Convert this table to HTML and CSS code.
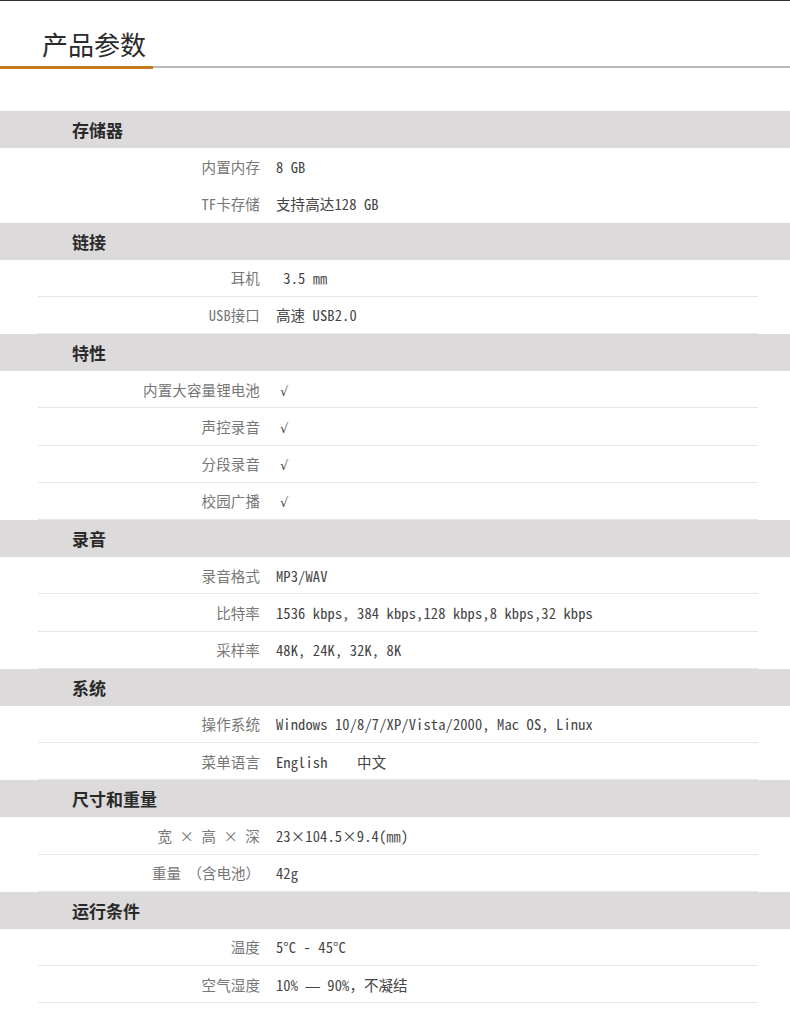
FILE: index.html
```html
<!DOCTYPE html>
<html lang="zh-CN">
<head>
<meta charset="utf-8">
<title>产品参数</title>
<link rel="stylesheet" href="styles.css">
</head>
<body>
<div class="page">
  <header class="top">
    <h1 class="title">产品参数</h1>
    <div class="rule"><span class="rule-accent"></span><span class="rule-line"></span></div>
  </header>

  <section class="spec">
    <h2 class="sec-head">存储器</h2>
    <div class="row nob"><span class="lbl">内置内存</span><span class="val">8 GB</span></div>
    <div class="row nob"><span class="lbl">TF卡存储</span><span class="val">支持高达128 GB</span></div>

    <h2 class="sec-head">链接</h2>
    <div class="row"><span class="lbl">耳机</span><span class="val"> 3.5 ㎜</span></div>
    <div class="row"><span class="lbl">USB接口</span><span class="val">高速 USB2.0</span></div>

    <h2 class="sec-head">特性</h2>
    <div class="row"><span class="lbl">内置大容量锂电池</span><span class="val"><span class="check">√</span></span></div>
    <div class="row"><span class="lbl">声控录音</span><span class="val"><span class="check">√</span></span></div>
    <div class="row"><span class="lbl">分段录音</span><span class="val"><span class="check">√</span></span></div>
    <div class="row"><span class="lbl">校园广播</span><span class="val"><span class="check">√</span></span></div>

    <h2 class="sec-head">录音</h2>
    <div class="row"><span class="lbl">录音格式</span><span class="val">MP3/WAV</span></div>
    <div class="row"><span class="lbl">比特率</span><span class="val">1536 kbps, 384 kbps,128 kbps,8 kbps,32 kbps</span></div>
    <div class="row"><span class="lbl">采样率</span><span class="val">48K, 24K, 32K, 8K</span></div>

    <h2 class="sec-head">系统</h2>
    <div class="row"><span class="lbl">操作系统</span><span class="val">Windows 10/8/7/XP/Vista/2000, Mac OS, Linux</span></div>
    <div class="row"><span class="lbl">菜单语言</span><span class="val">English    中文</span></div>

    <h2 class="sec-head">尺寸和重量</h2>
    <div class="row"><span class="lbl">宽 × 高 × 深</span><span class="val">23×104.5×9.4(㎜)</span></div>
    <div class="row"><span class="lbl fw">重量  （含电池）</span><span class="val">42g</span></div>

    <h2 class="sec-head">运行条件</h2>
    <div class="row"><span class="lbl">温度</span><span class="val">5°C - 45°C</span></div>
    <div class="row"><span class="lbl">空气湿度</span><span class="val">10% <span class="dash">—</span> 90%<span class="fw">，不凝结</span></span></div>
  </section>
</div>
</body>
</html>
```

FILE: styles.css
```css
html, body {
  margin: 0;
  padding: 0;
  background: #ffffff;
}

body {
  font-family: "Noto Sans CJK SC", "Noto Sans", sans-serif;
  color: #333333;
}

.page {
  width: 790px;
  border-top: 1px solid #333333;
}

.top {
  padding-top: 29px;
}

.title {
  margin: 0 0 0 42px;
  font-size: 26px;
  line-height: 28px;
  font-weight: 400;
  color: #2b2b2b;
  height: 36px;
}

.rule {
  display: flex;
  align-items: flex-start;
}

.rule-accent {
  width: 153px;
  height: 3px;
  background: #c47a1e;
}

.rule-line {
  flex: 1;
  height: 2px;
  background: #b8b8b8;
}

.spec {
  margin-top: 42px;
}

.sec-head {
  margin: 0;
  height: 37px;
  line-height: 37px;
  padding-left: 72px;
  background: #dcdadb;
  font-size: 17px;
  font-weight: 700;
  color: #2a2a2a;
}

.row {
  display: grid;
  grid-template-columns: 222px 1fr;
  column-gap: 16px;
  align-items: center;
  height: 36.25px;
  margin: 0 32px 0 38px;
  border-bottom: 1px solid #e8e8e8;
  font-size: 14.5px;
  font-feature-settings: "hwid" 1;
  letter-spacing: 0.12px;
}

.row.nob {
  border-bottom-color: transparent;
}

.lbl {
  text-align: right;
  color: #777777;
  white-space: pre;
}

.val {
  color: #444444;
  white-space: pre;
}

.fw {
  font-feature-settings: normal;
  letter-spacing: 0;
}

.dash {
  font-family: "Liberation Sans", sans-serif;
  font-feature-settings: normal;
  letter-spacing: 0;
}

.check {
  display: inline-block;
  padding-left: 4px;
  font-family: "DejaVu Sans", sans-serif;
  font-size: 13px;
  color: #444444;
}
```
